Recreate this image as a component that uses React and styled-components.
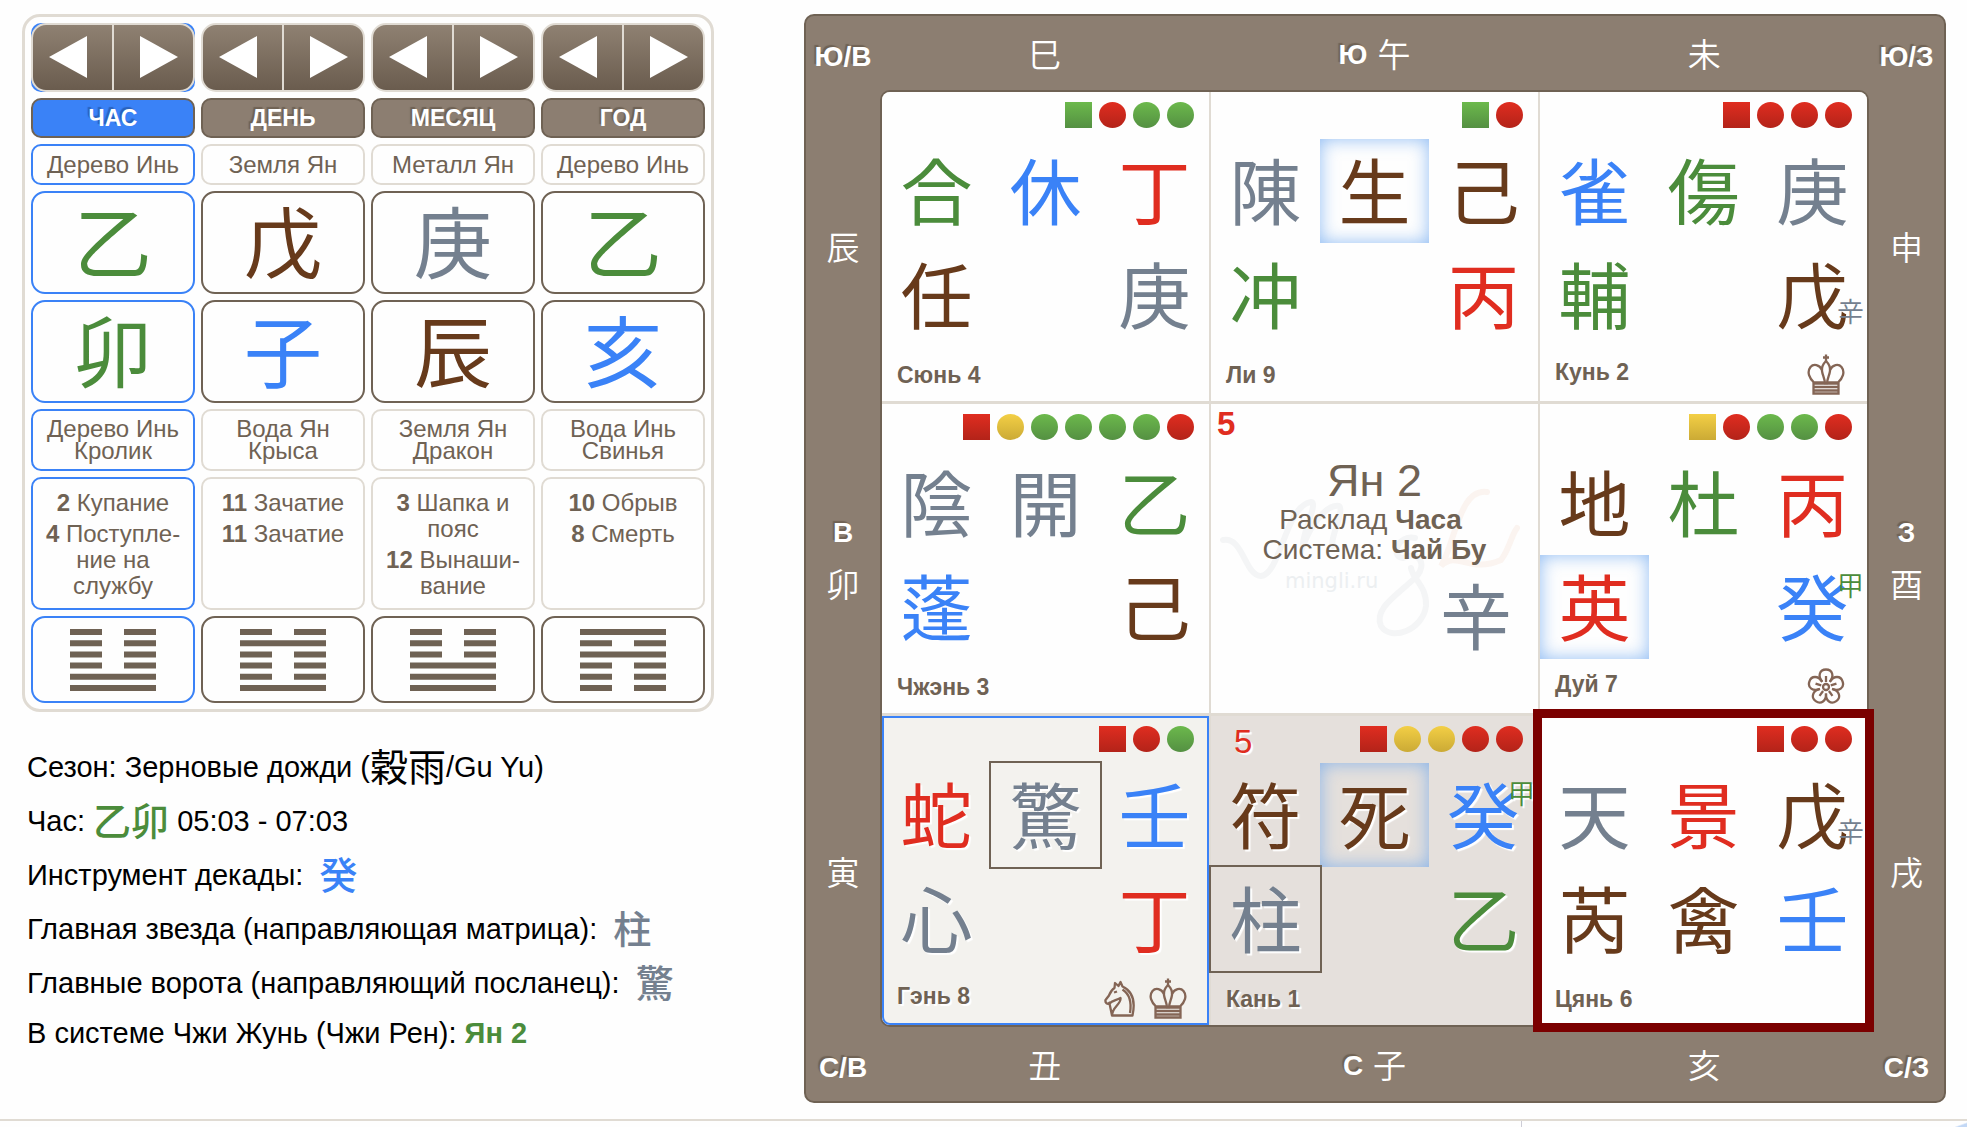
import React from "react";
import styled, { createGlobalStyle, css } from "styled-components";

const colors = {
  wood: "#4b8c3b",
  fire: "#e02d20",
  earth: "#673a1b",
  metal: "#74808f",
  water: "#3a82f7",
  brown: "#8c7e71",
  dark: "#6f6254",
  line: "#e0dbd3",
};

const cjk = `"Noto Sans CJK JP", "Noto Sans CJK TC", sans-serif`;

const GlobalStyle = createGlobalStyle`
  * {
    box-sizing: border-box;
  }

  body {
    margin: 0;
    background: #fefefe;
    color: #000;
    font-family: "Liberation Sans", ${cjk};
  }
`;

const Page = styled.div`
  display: flex;
  flex-direction: column;
  min-height: 100vh;
  overflow: hidden;
`;

const Content = styled.main`
  display: grid;
  grid-template-columns: minmax(0, 692fr) minmax(0, 1142fr);
  align-items: start;
  gap: 90px;
  padding: 14px 21px 16px 22px;
`;

const Footer = styled.footer`
  display: grid;
  grid-template-columns: 1521fr 446fr;
  flex: 1;
  border-top: 2px solid ${colors.line};
`;

const FooterPart = styled.div`
  & + & {
    border-left: 1px solid #cdcdd6;
    background: linear-gradient(160deg, transparent 97%, #c3d8f5 98%);
  }
`;

// Pillars

const Pillars = styled.section`
  display: grid;
  grid-template-columns: repeat(4, minmax(0, 1fr));
  gap: 6px;
  padding: 6px;
  border: 3px solid ${colors.line};
  border-radius: 18px;
`;

const Pillar = styled.div`
  display: flex;
  flex-direction: column;
  gap: 6px;
  color: ${colors.dark};
`;

const Stepper = styled.div`
  display: flex;
  height: 69px;
  background: ${(props) => (props.$active ? colors.water : "transparent")};
  border-radius: 10px;
`;

const StepButton = styled.button`
  flex: 1;
  display: flex;
  align-items: center;
  justify-content: center;
  padding: 0 0 2px;
  border: 2px solid ${colors.line};
  background: linear-gradient(#8f8172, #6a5c4e);
  cursor: pointer;

  &:first-child {
    padding-right: 10px;
    border-right-width: 1px;
    border-radius: 15px 0 0 15px;
  }

  &:last-child {
    padding-left: 10px;
    border-left-width: 1px;
    border-radius: 0 15px 15px 0;
  }
`;

const Card = styled.div`
  display: flex;
  align-items: center;
  justify-content: center;
  text-align: center;
  border: 2px solid
    ${(props) =>
      props.$active ? colors.water : props.$strong ? colors.dark : colors.line};
  border-radius: ${(props) => (props.$strong ? "14px" : "10px")};
`;

const PillarTitle = styled.h2`
  display: flex;
  align-items: center;
  justify-content: center;
  height: 40px;
  margin: 0;
  border: 2px solid ${colors.dark};
  border-radius: 10px;
  background: ${(props) => (props.$active ? colors.water : colors.brown)};
  color: #fff;
  font-size: 23px;
  line-height: 26px;
  text-shadow: -2px -2px 1px
    ${(props) => (props.$active ? "#2a62bd" : colors.dark)};
`;

const Element = styled(Card)`
  height: 41px;
  font-size: 24px;
  line-height: 26px;
`;

const Glyph = styled(Card)`
  height: 103px;
  padding-bottom: 7px;
  color: ${(props) => colors[props.$color]};
  font-family: ${cjk};
  font-size: 78px;
  line-height: 80px;
`;

const Animal = styled(Card)`
  height: 62px;
  font-size: 24px;
  line-height: 22px;
`;

const Phases = styled(Card)`
  flex-direction: column;
  justify-content: flex-start;
  gap: 5px;
  height: 133px;
  padding: 11px 8px 0;
  font-size: 24px;
  line-height: 26px;
`;

const Phase = styled.div``;

const HexagramCard = styled(Card)`
  height: 87px;
`;

// Summary under the pillars

const Summary = styled.div`
  padding: 28px 5px 0;
  font-size: 29px;
`;

const SummaryLine = styled.p`
  display: flex;
  align-items: center;
  height: 54px;
  margin: 0;
  white-space: pre;

  &:last-child {
    height: 46px;
  }
`;

const Sign = styled.span`
  padding-bottom: 5px;
  color: ${(props) => colors[props.$color] || "inherit"};
  font-family: ${cjk};
  font-size: 38px;
  font-weight: ${(props) => (props.$color ? 500 : 400)};
  line-height: 48px;
`;

const Good = styled.b`
  color: ${colors.wood};
`;

// Board

const Board = styled.section`
  display: grid;
  grid-template-columns: 74px minmax(0, 1fr) 75px;
  grid-template-rows: 74px auto 74px;
  border: 2px solid ${colors.dark};
  border-radius: 10px;
  background: ${colors.brown};
  color: #fff;
`;

const Edge = styled.div`
  display: grid;
  ${(props) =>
    props.$vertical
      ? "grid-template-rows: repeat(3, 1fr);"
      : "grid-template-columns: repeat(3, 1fr);"}
`;

const Direction = styled.div`
  display: flex;
  flex-direction: ${(props) => (props.$vertical ? "column" : "row")};
  align-items: center;
  justify-content: center;
  gap: ${(props) => (props.$vertical ? "14px" : "10px")};
`;

const Side = styled.span`
  padding-top: ${(props) => (props.$vertical ? "0" : "4px")};
  font-size: 28px;
  font-weight: bold;
  line-height: 36px;
  text-align: center;
  text-shadow: -2px -2px 1px ${colors.dark};
`;

const Corner = styled(Side)`
  align-self: center;
  padding-top: 8px;
`;

const Branch = styled.span`
  font-family: ${cjk};
  font-size: 33px;
  font-weight: 350;
  line-height: 36px;
`;

const Palaces = styled.div`
  display: grid;
  grid-template-columns: repeat(3, minmax(0, 1fr));
  gap: 3px 2px;
  border: 2px solid ${colors.dark};
  border-radius: 10px;
  background: ${colors.line};
`;

const tones = {
  plain: css`
    background: #fefefe;
  `,
  current: css`
    background: #f3f2ee;
    box-shadow: inset 0 0 0 2px ${colors.water};
    text-shadow: 2px 2px 1px #fff;
  `,
  shaded: css`
    background: #e5e0dc;
    text-shadow: 2px 2px 1px #fff;
  `,
  marked: css`
    z-index: 1;
    background: #fefefe;
    outline: 9px solid #7b0000;
    outline-offset: -2px;
  `,
};

const Palace = styled.article`
  position: relative;
  display: flex;
  flex-direction: column;
  height: 309px;
  color: ${colors.dark};
  ${(props) => tones[props.$tone || "plain"]}

  &:nth-child(1) {
    border-top-left-radius: 8px;
  }
  &:nth-child(3) {
    border-top-right-radius: 8px;
  }
  &:nth-child(7) {
    border-bottom-left-radius: 8px;
  }
`;

const Marks = styled.div`
  display: flex;
  justify-content: flex-end;
  gap: 7px;
  height: 47px;
  padding: 10px 15px 0;
`;

const gradients = {
  g: "linear-gradient(#6cb94c, #549042)",
  r: "linear-gradient(#e02d20, #b32319)",
  y: "linear-gradient(#f3cf45, #cbaa35)",
};

const Mark = styled.span`
  width: 27px;
  height: 26px;
  background: ${(props) => gradients[props.$color]};
  border-radius: ${(props) => (props.$round ? "50%" : "0")};
`;

const FiveMark = styled.span`
  margin-right: auto;
  padding-left: 8px;
  color: ${colors.fire};
  font-size: 33px;
  line-height: 32px;
`;

const Signs = styled.div`
  display: grid;
  grid-template-columns: repeat(3, 1fr);
  grid-auto-rows: 104px;
`;

const PalaceSign = styled.div`
  position: relative;
  display: flex;
  align-items: center;
  justify-content: center;
  padding-bottom: 7px;
  color: ${(props) => colors[props.$color]};
  font-family: ${cjk};
  font-size: 72px;
  line-height: 96px;
  ${(props) =>
    props.$glow && "box-shadow: inset 0 0 18px rgba(95, 160, 240, 0.7);"}
  ${(props) => props.$framed && `outline: 2px solid ${colors.dark};`}
`;

const SubSign = styled.span`
  position: absolute;
  right: 3px;
  ${(props) => (props.$low ? "bottom: 22px;" : "top: 16px;")}
  color: ${(props) => colors[props.$color]};
  font-size: 27px;
  font-weight: 350;
  line-height: 28px;
`;

const PalaceFooter = styled.div`
  flex: 1;
  display: flex;
  align-items: center;
  gap: 13px;
  padding: 2px 22px 0 15px;
`;

const PalaceName = styled.h3`
  flex: 1;
  margin: 0;
  padding-bottom: ${(props) => (props.$raised ? "6px" : "0")};
  font-size: 23px;
  line-height: 26px;
`;

const CenterNumber = styled.b`
  height: 53px;
  padding: 4px 6px;
  color: ${colors.fire};
  font-size: 33px;
  line-height: 32px;
`;

const CenterText = styled.div`
  position: relative;
  font-size: 28px;
  line-height: 30px;
  text-align: center;
`;

const CenterTitle = styled.div`
  font-size: 45px;
  line-height: 48px;
`;

const CenterSign = styled(PalaceSign)`
  justify-content: flex-end;
  padding-right: 26px;
`;

const Watermark = styled.svg`
  position: absolute;
  left: 8px;
  top: 80px;
  width: 304px;
  height: 160px;
`;

const pillars = [
  {
    title: "ЧАС",
    active: true,
    element: "Дерево Инь",
    stem: ["乙", "wood"],
    branch: ["卯", "wood"],
    animal: ["Дерево Инь", "Кролик"],
    phases: [
      [2, "Купание"],
      [4, "Поступле\u00adние на службу"],
    ],
    hexagram: "000011",
  },
  {
    title: "ДЕНЬ",
    element: "Земля Ян",
    stem: ["戊", "earth"],
    branch: ["子", "water"],
    animal: ["Вода Ян", "Крыса"],
    phases: [
      [11, "Зачатие"],
      [11, "Зачатие"],
    ],
    hexagram: "010001",
  },
  {
    title: "МЕСЯЦ",
    element: "Металл Ян",
    stem: ["庚", "metal"],
    branch: ["辰", "earth"],
    animal: ["Земля Ян", "Дракон"],
    phases: [
      [3, "Шапка и пояс"],
      [12, "Вынаши\u00adвание"],
    ],
    hexagram: "000111",
  },
  {
    title: "ГОД",
    element: "Дерево Инь",
    stem: ["乙", "wood"],
    branch: ["亥", "water"],
    animal: ["Вода Инь", "Свинья"],
    phases: [
      [10, "Обрыв"],
      [8, "Смерть"],
    ],
    hexagram: "101000",
  },
];

// signs: six places, row by row; the first mark is always the square one
const palaces = [
  {
    name: "Сюнь 4",
    marks: "grgg",
    signs: [
      { text: "合", color: "wood" },
      { text: "休", color: "water" },
      { text: "丁", color: "fire" },
      { text: "任", color: "earth" },
      {},
      { text: "庚", color: "metal" },
    ],
  },
  {
    name: "Ли 9",
    marks: "gr",
    signs: [
      { text: "陳", color: "metal" },
      { text: "生", color: "earth", glow: true },
      { text: "己", color: "earth" },
      { text: "冲", color: "wood" },
      {},
      { text: "丙", color: "fire" },
    ],
  },
  {
    name: "Кунь 2",
    marks: "rrrr",
    icons: ["king"],
    signs: [
      { text: "雀", color: "water" },
      { text: "傷", color: "wood" },
      { text: "庚", color: "metal" },
      { text: "輔", color: "wood" },
      {},
      { text: "戊", color: "earth", sub: "辛", subColor: "metal", low: true },
    ],
  },
  {
    name: "Чжэнь 3",
    marks: "ryggggr",
    signs: [
      { text: "陰", color: "metal" },
      { text: "開", color: "metal" },
      { text: "乙", color: "wood" },
      { text: "蓬", color: "water" },
      {},
      { text: "己", color: "earth" },
    ],
  },
  { center: true },
  {
    name: "Дуй 7",
    marks: "yrggr",
    icons: ["flower"],
    signs: [
      { text: "地", color: "earth" },
      { text: "杜", color: "wood" },
      { text: "丙", color: "fire" },
      { text: "英", color: "fire", glow: true },
      {},
      { text: "癸", color: "water", sub: "甲", subColor: "wood" },
    ],
  },
  {
    name: "Гэнь 8",
    tone: "current",
    marks: "rrg",
    icons: ["knight", "king"],
    signs: [
      { text: "蛇", color: "fire" },
      { text: "驚", color: "metal", framed: true },
      { text: "壬", color: "water" },
      { text: "心", color: "metal" },
      {},
      { text: "丁", color: "fire" },
    ],
  },
  {
    name: "Кань 1",
    tone: "shaded",
    five: true,
    marks: "ryyrr",
    signs: [
      { text: "符", color: "earth" },
      { text: "死", color: "earth", glow: true },
      { text: "癸", color: "water", sub: "甲", subColor: "wood" },
      { text: "柱", color: "metal", framed: true },
      {},
      { text: "乙", color: "wood" },
    ],
  },
  {
    name: "Цянь 6",
    tone: "marked",
    marks: "rrr",
    signs: [
      { text: "天", color: "metal" },
      { text: "景", color: "fire" },
      { text: "戊", color: "earth", sub: "辛", subColor: "metal", low: true },
      { text: "芮", color: "earth" },
      { text: "禽", color: "earth" },
      { text: "壬", color: "water" },
    ],
  },
];

const Arrow = ({ right }) => (
  <svg width="38" height="42" viewBox="0 0 38 42" fill="#fff">
    <path d={right ? "M0 0L38 21L0 42Z" : "M38 0L0 21L38 42Z"} />
  </svg>
);

const Hexagram = ({ lines }) => (
  <svg width="86" height="62" viewBox="0 0 86 62" fill={colors.dark}>
    {lines.split("").map((line, i) => (
      <path
        key={i}
        transform={`translate(0 ${i * 11.2})`}
        d={line === "1" ? "M0 0H86V6H0Z" : "M0 0H32V6H0ZM54 0H86V6H54Z"}
      />
    ))}
  </svg>
);

const KingIcon = () => (
  <svg width="38" height="42" viewBox="0 0 38 42" fill="none" stroke="#846555" strokeWidth="2.300">
    <path d="M19 0.5V7M16 3.5H22" />
    <path d="M19 7C16 10 14.500 13.500 15 17C15.500 21 17.500 24 18 29H20C20.500 24 22.500 21 23 17C23.500 13.500 22 10 19 7Z" />
    <path d="M15 16C12.500 10.500 6.500 9.500 3.500 13C-0.500 18 2.500 24.500 7 28.500H17" />
    <path d="M23 16C25.500 10.500 31.500 9.500 34.500 13C38.500 18 35.500 24.500 31 28.500H21" />
    <path d="M6.500 29.500H31.500V39.500H6.500ZM6.500 33H31.500M6.500 36.500H31.500" />
  </svg>
);

const KnightIcon = () => (
  <svg width="32" height="38" viewBox="0 0 32 38" fill="none" stroke="#846555" strokeWidth="2.300" strokeLinejoin="round">
    <path d="M8 35.500H28.500C31 24 30.500 12 18.500 6.500L16.500 2L14.500 6L11 3L10.500 8C7 10 6 13 5 15.500L1.500 20C1 22.500 3 24.500 5.500 23.500L4.500 22M5.500 23.500C8 20.500 12 20.500 16.500 18C17.500 24 8 27 8 35.500Z" />
    <path d="M18.500 9.500C27 15 27.500 24 26 33" />
    <path d="M10 12.500L13 11.500" />
  </svg>
);

const FlowerIcon = () => (
  <svg width="38" height="38" viewBox="-19 -19 38 38" fill="none" stroke="#846555" strokeWidth="2.300">
    <circle r="3" />
    {[0, 72, 144, 216, 288].map((angle) => (
      <g key={angle} transform={`rotate(${angle})`}>
        <path d="M-3.800 -5.200C-8.500 -11 -6.500 -17.500 0 -17.500C6.500 -17.500 8.500 -11 3.800 -5.200" />
        <path d="M0 -5V-11" />
      </g>
    ))}
  </svg>
);

const icons = { king: KingIcon, knight: KnightIcon, flower: FlowerIcon };

const edges = {
  top: [["", "巳"], ["Ю", "午"], ["", "未"]],
  left: [["", "辰"], ["В", "卯"], ["", "寅"]],
  right: [["", "申"], ["З", "酉"], ["", "戌"]],
  bottom: [["", "丑"], ["С", "子"], ["", "亥"]],
};

const BoardEdge = ({ items, vertical }) => (
  <Edge $vertical={vertical}>
    {items.map(([side, branch]) => (
      <Direction key={branch} $vertical={vertical}>
        {side && <Side $vertical={vertical}>{side}</Side>}
        <Branch>{branch}</Branch>
      </Direction>
    ))}
  </Edge>
);

const CenterPalace = () => (
  <Palace>
    <Watermark viewBox="0 0 304 160" fill="none" strokeLinecap="round">
      <g stroke="#f4f5f6" strokeWidth="6">
        <path d="M4 56C24 52 26 92 42 92C62 90 66 22 92 18C100 18 82 52 84 62C92 40 108 20 120 22C126 26 110 56 114 62" />
        <path d="M196 54C180 50 170 72 184 74C200 66 208 80 198 92C180 110 154 124 162 142C172 158 204 146 207 122C208 102 194 96 192 84" />
      </g>
      <path stroke="#fbf4f0" strokeWidth="6" d="M268 8C240 4 236 60 222 82C238 66 250 90 282 76C290 66 292 52 298 44" />
      <text x="66" y="104" fill="#eceff1" fontFamily="DejaVu Sans" fontSize="21">
        mingli.ru
      </text>
    </Watermark>
    <CenterNumber>5</CenterNumber>
    <CenterText>
      <CenterTitle>Ян 2</CenterTitle>
      Расклад <b>Часа</b>&nbsp;
      <br />
      Система: <b>Чай Бу</b>
    </CenterText>
    <CenterSign $color="metal">辛</CenterSign>
  </Palace>
);

const PalaceCell = ({ palace }) => (
  <Palace $tone={palace.tone}>
    <Marks>
      {palace.five && <FiveMark>5</FiveMark>}
      {palace.marks.split("").map((mark, i) => (
        <Mark key={i} $color={mark} $round={i > 0} />
      ))}
    </Marks>
    <Signs>
      {palace.signs.map((sign, i) => (
        <PalaceSign key={i} $color={sign.color} $glow={sign.glow} $framed={sign.framed}>
          {sign.text}
          {sign.sub && (
            <SubSign $color={sign.subColor} $low={sign.low}>
              {sign.sub}
            </SubSign>
          )}
        </PalaceSign>
      ))}
    </Signs>
    <PalaceFooter>
      <PalaceName $raised={Boolean(palace.icons)}>{palace.name}</PalaceName>
      {palace.icons?.map((name) => {
        const Icon = icons[name];
        return <Icon key={name} />;
      })}
    </PalaceFooter>
  </Palace>
);

function App() {
  return (
    <Page>
      <GlobalStyle />
      <Content>
        <div>
          <Pillars>
            {pillars.map((pillar) => (
              <Pillar key={pillar.title}>
                <Stepper $active={pillar.active}>
                  <StepButton aria-label={`${pillar.title}: назад`}>
                    <Arrow />
                  </StepButton>
                  <StepButton aria-label={`${pillar.title}: вперёд`}>
                    <Arrow right />
                  </StepButton>
                </Stepper>
                <PillarTitle $active={pillar.active}>{pillar.title}</PillarTitle>
                <Element $active={pillar.active}>{pillar.element}</Element>
                <Glyph $strong $active={pillar.active} $color={pillar.stem[1]}>
                  {pillar.stem[0]}
                </Glyph>
                <Glyph $strong $active={pillar.active} $color={pillar.branch[1]}>
                  {pillar.branch[0]}
                </Glyph>
                <Animal $active={pillar.active}>
                  {pillar.animal[0]}
                  <br />
                  {pillar.animal[1]}
                </Animal>
                <Phases $active={pillar.active}>
                  {pillar.phases.map(([number, text], i) => (
                    <Phase key={i}>
                      <b>{number}</b> {text}
                    </Phase>
                  ))}
                </Phases>
                <HexagramCard $strong $active={pillar.active}>
                  <Hexagram lines={pillar.hexagram} />
                </HexagramCard>
              </Pillar>
            ))}
          </Pillars>

          <Summary>
            <SummaryLine>
              Сезон: Зерновые дожди (<Sign>穀雨</Sign>/Gu Yu)
            </SummaryLine>
            <SummaryLine>
              Час: <Sign $color="wood">乙卯</Sign> 05:03 - 07:03
            </SummaryLine>
            <SummaryLine>
              Инструмент декады:{"  "}
              <Sign $color="water">癸</Sign>
            </SummaryLine>
            <SummaryLine>
              Главная звезда (направляющая матрица):{"  "}
              <Sign $color="metal">柱</Sign>
            </SummaryLine>
            <SummaryLine>
              Главные ворота (направляющий посланец):{"  "}
              <Sign $color="metal">驚</Sign>
            </SummaryLine>
            <SummaryLine>
              В системе Чжи Жунь (Чжи Рен): <Good>Ян 2</Good>
            </SummaryLine>
          </Summary>
        </div>

        <Board>
          <Corner>Ю/В</Corner>
          <BoardEdge items={edges.top} />
          <Corner>Ю/З</Corner>
          <BoardEdge items={edges.left} vertical />
          <Palaces>
            {palaces.map((palace, i) =>
              palace.center ? (
                <CenterPalace key={i} />
              ) : (
                <PalaceCell key={i} palace={palace} />
              )
            )}
          </Palaces>
          <BoardEdge items={edges.right} vertical />
          <Corner>С/В</Corner>
          <BoardEdge items={edges.bottom} />
          <Corner>С/З</Corner>
        </Board>
      </Content>
      <Footer>
        <FooterPart />
        <FooterPart />
      </Footer>
    </Page>
  );
}

export default App;
